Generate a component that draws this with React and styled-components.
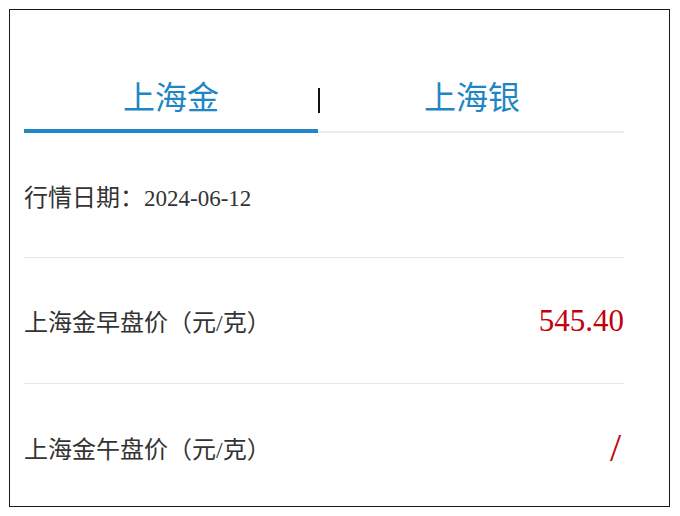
import React, { useState } from "react";
import styled, { createGlobalStyle } from "styled-components";

const Global = createGlobalStyle`
  html, body { margin: 0; padding: 0; background: #fff; }
  body { font-family: "Liberation Serif", "Noto Sans CJK SC", serif; }
`;

const Page = styled.div`
  padding: 9px;
`;

const Frame = styled.div`
  box-sizing: border-box;
  width: 661px;
  height: 498px;
  border: 1px solid #1a1a1a;
  padding: 49px 0 0 14px;
  overflow: hidden;
`;

const Content = styled.div`
  width: 600px;
`;

const Tabs = styled.div`
  display: flex;
  align-items: center;
  height: 74px;
  border-bottom: 2px solid #ececec;
  box-sizing: border-box;
`;

const Tab = styled.div`
  position: relative;
  flex: ${(p) => p.$grow};
  height: 100%;
  display: flex;
  align-items: center;
  justify-content: center;
  font-family: "Liberation Serif", "Noto Sans CJK SC", serif;
  font-size: 32px;
  color: #1f86c6;
  cursor: pointer;
  &::after {
    content: "";
    position: absolute;
    left: 0;
    right: 0;
    bottom: -2px;
    height: 4px;
    background: ${(p) => (p.$active ? "#2386c8" : "transparent")};
  }
`;

const Sep = styled.div`
  width: 2px;
  height: 25px;
  background: #111;
  margin-top: 10px;
`;

const Row = styled.div`
  display: flex;
  align-items: center;
  justify-content: space-between;
  height: ${(p) => p.$h}px;
  border-bottom: ${(p) => (p.$last ? "none" : "1px solid #e6e6e6")};
  box-sizing: border-box;
`;

const Label = styled.span`
  font-family: "Liberation Serif", "Noto Sans CJK SC", serif;
  font-size: 24px;
  color: #333;
`;

const DateText = styled.span`
  font-size: 23px;
`;

const Value = styled.span`
  font-family: "Liberation Serif", serif;
  font-size: ${(p) => (p.$empty ? 40 : 31)}px;
  padding-right: ${(p) => (p.$empty ? 3 : 0)}px;
  color: #c4000c;
`;

export default function App() {
  const [tab, setTab] = useState(0);
  return (
    <>
      <Global />
      <Page>
        <Frame>
          <Content>
            <Tabs>
              <Tab $grow="294" $active={tab === 0} onClick={() => setTab(0)}>
                上海金
              </Tab>
              <Sep />
              <Tab $grow="304" $active={tab === 1} onClick={() => setTab(1)}>
                上海银
              </Tab>
            </Tabs>
            <Row $h={125}>
              <Label>
                行情日期：<DateText>2024-06-12</DateText>
              </Label>
            </Row>
            <Row $h={126}>
              <Label>上海金早盘价（元/克）</Label>
              <Value>545.40</Value>
            </Row>
            <Row $h={126} $last>
              <Label>上海金午盘价（元/克）</Label>
              <Value $empty>/</Value>
            </Row>
          </Content>
        </Frame>
      </Page>
    </>
  );
}
